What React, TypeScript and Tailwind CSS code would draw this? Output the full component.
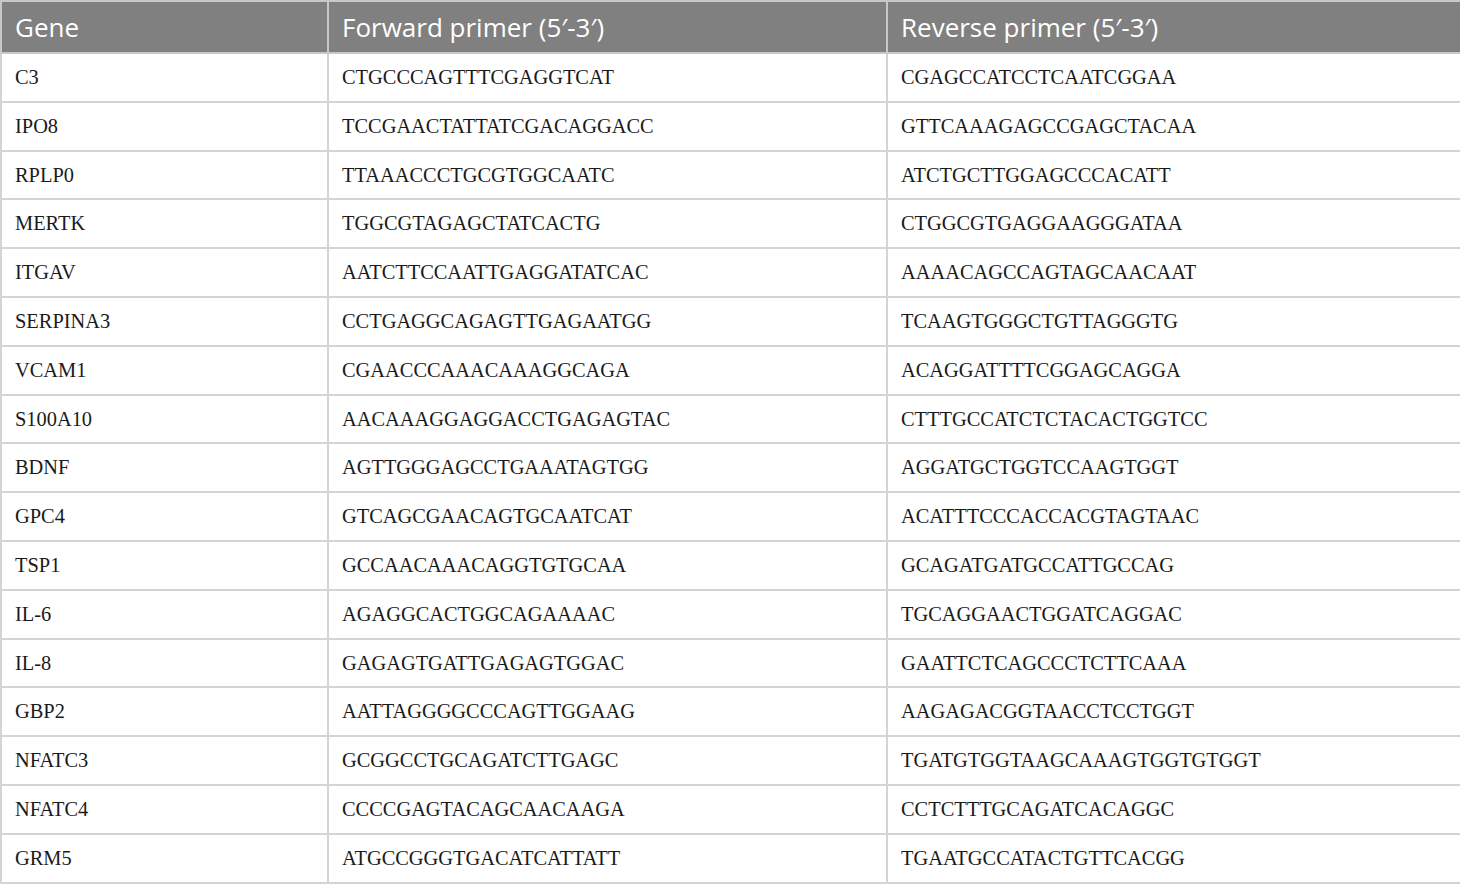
const rows: [string, string, string][] = [
  ["C3", "CTGCCCAGTTTCGAGGTCAT", "CGAGCCATCCTCAATCGGAA"],
  ["IPO8", "TCCGAACTATTATCGACAGGACC", "GTTCAAAGAGCCGAGCTACAA"],
  ["RPLP0", "TTAAACCCTGCGTGGCAATC", "ATCTGCTTGGAGCCCACATT"],
  ["MERTK", "TGGCGTAGAGCTATCACTG", "CTGGCGTGAGGAAGGGATAA"],
  ["ITGAV", "AATCTTCCAATTGAGGATATCAC", "AAAACAGCCAGTAGCAACAAT"],
  ["SERPINA3", "CCTGAGGCAGAGTTGAGAATGG", "TCAAGTGGGCTGTTAGGGTG"],
  ["VCAM1", "CGAACCCAAACAAAGGCAGA", "ACAGGATTTTCGGAGCAGGA"],
  ["S100A10", "AACAAAGGAGGACCTGAGAGTAC", "CTTTGCCATCTCTACACTGGTCC"],
  ["BDNF", "AGTTGGGAGCCTGAAATAGTGG", "AGGATGCTGGTCCAAGTGGT"],
  ["GPC4", "GTCAGCGAACAGTGCAATCAT", "ACATTTCCCACCACGTAGTAAC"],
  ["TSP1", "GCCAACAAACAGGTGTGCAA", "GCAGATGATGCCATTGCCAG"],
  ["IL-6", "AGAGGCACTGGCAGAAAAC", "TGCAGGAACTGGATCAGGAC"],
  ["IL-8", "GAGAGTGATTGAGAGTGGAC", "GAATTCTCAGCCCTCTTCAAA"],
  ["GBP2", "AATTAGGGGCCCAGTTGGAAG", "AAGAGACGGTAACCTCCTGGT"],
  ["NFATC3", "GCGGCCTGCAGATCTTGAGC", "TGATGTGGTAAGCAAAGTGGTGTGGT"],
  ["NFATC4", "CCCCGAGTACAGCAACAAGA", "CCTCTTTGCAGATCACAGGC"],
  ["GRM5", "ATGCCGGGTGACATCATTATT", "TGAATGCCATACTGTTCACGG"],
];

export default function App() {
  return (
    <div className="w-[1460px] h-[884px] bg-white">
      <table className="w-[1460px] border-collapse table-fixed">
        <colgroup>
          <col className="w-[327px]" />
          <col className="w-[559px]" />
          <col className="w-[574px]" />
        </colgroup>
        <thead>
          <tr className="h-[52px] bg-[#808080] text-white text-[26px] font-['Open_Sans',sans-serif]">
            <th className="border-2 border-[#c8c8c8] text-left font-normal px-[13px]">Gene</th>
            <th className="border-2 border-[#c8c8c8] text-left font-normal px-[13px]">Forward primer (5′-3′)</th>
            <th className="border-2 border-[#c8c8c8] text-left font-normal px-[13px]">Reverse primer (5′-3′)</th>
          </tr>
        </thead>
        <tbody className="font-['Liberation_Serif',serif] text-[20.4px] text-[#1a1a1a]">
          {rows.map((r) => (
            <tr key={r[0]} className="h-[48.8px]">
              {r.map((c, i) => (
                <td key={i} className="border-2 border-[#d4d4d4] px-[13px] py-0">
                  {c}
                </td>
              ))}
            </tr>
          ))}
        </tbody>
      </table>
    </div>
  );
}
